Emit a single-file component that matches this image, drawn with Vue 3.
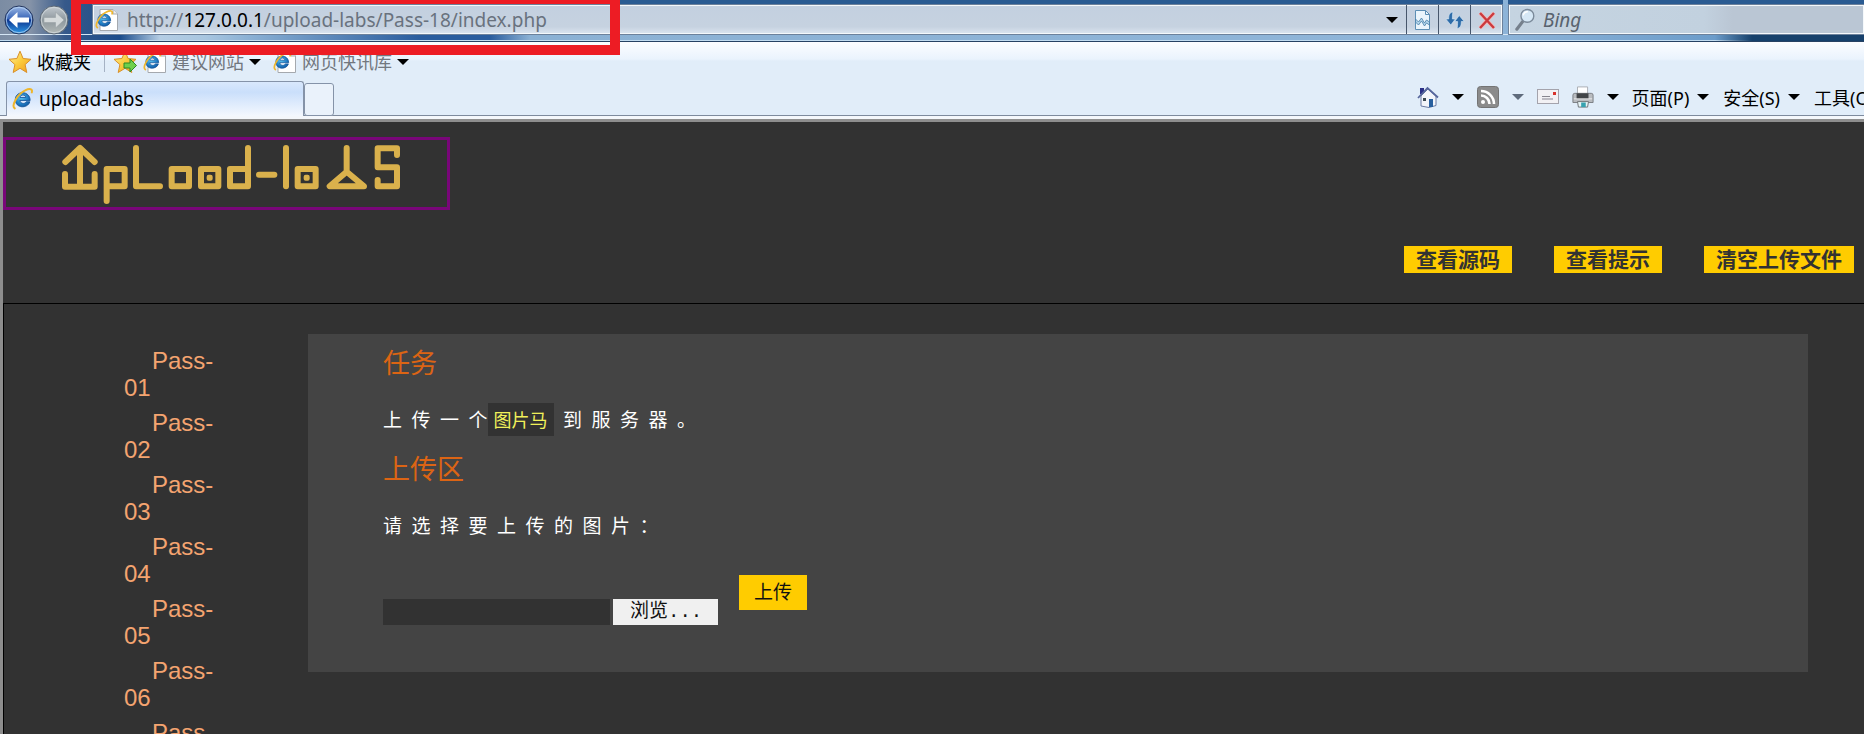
<script setup>
import { ref } from 'vue'

const address = ref('http://127.0.0.1/upload-labs/Pass-18/index.php')
const passes = ['01', '02', '03', '04', '05', '06', '07']
const actions = ['查看源码', '查看提示', '清空上传文件']
const query = ref('')
const fileName = ref('')
</script>

<template>
  <div class="window">
    <svg class="defs" width="0" height="0" aria-hidden="true">
      <defs>
        <radialGradient id="eBlue" cx=".4" cy=".35" r=".75">
          <stop offset="0" stop-color="#5cc4f0" />
          <stop offset=".6" stop-color="#1f7dc4" />
          <stop offset="1" stop-color="#0f4f96" />
        </radialGradient>
        <linearGradient id="starFill" x1="0" y1="0" x2="1" y2="1">
          <stop offset="0" stop-color="#fff3a0" />
          <stop offset=".5" stop-color="#fbcb3c" />
          <stop offset="1" stop-color="#f09a1c" />
        </linearGradient>
        <linearGradient id="backFill" x1="0" y1="0" x2="0" y2="1">
          <stop offset="0" stop-color="#9db9e6" />
          <stop offset=".45" stop-color="#3a66b8" />
          <stop offset=".5" stop-color="#0c3590" />
          <stop offset="1" stop-color="#2f9be8" />
        </linearGradient>
        <linearGradient id="forwardFill" x1="0" y1="0" x2="0" y2="1">
          <stop offset="0" stop-color="#c3cad0" />
          <stop offset=".5" stop-color="#8d979d" />
          <stop offset="1" stop-color="#b4bab8" />
        </linearGradient>
        <symbol id="ie" viewBox="0 0 20 20">
          <path d="M16.500 11.300H7.200c.3 3 4.500 3.700 5.700 1.200h3.300C14.300 19 3 18.800 3 10.500S16.500 2 16.500 11.300zM7.300 8.600h5.200c-.3-3-4.800-3-5.200 0z" fill="url(#eBlue)" stroke="#15549a" stroke-width=".8" />
          <path d="M2.500 18.500C-1 16 5 5.500 12 2.200c4-2 7-1.600 6 1.800" fill="none" stroke="#eeb62c" stroke-width="1.800" stroke-linecap="round" />
        </symbol>
        <symbol id="iePage" viewBox="0 0 24 24">
          <path d="M5 1.500h13l4.500 4.500v16.500H5z" fill="#fff" stroke="#a5a9ae" />
          <path d="M18 1.500V6h4.500" fill="#eee" stroke="#a5a9ae" />
          <use href="#ie" x="0" y="2" width="19" height="19" />
        </symbol>
        <symbol id="star" viewBox="0 0 24 24">
          <path d="M12 1.200l3.100 7.300 7.900.8-5.900 5.300 1.700 7.900-6.800-4.200-6.800 4.200 1.700-7.900L1 9.300l7.900-.8z" fill="url(#starFill)" stroke="#d9902a" stroke-linejoin="round" />
        </symbol>
      </defs>
    </svg>

    <header class="chrome">
      <div class="nav">
        <div class="history">
          <button class="round" aria-label="后退">
            <svg viewBox="0 0 30 30"><circle cx="15" cy="15" r="14" fill="url(#backFill)" stroke="#24365e" /><circle cx="15" cy="15" r="12.700" fill="none" stroke="#b7d4f3" stroke-width=".8" /><path d="M13.500 7L5 15l8.500 8v-5.500H25v-5H13.500z" fill="#fff" /></svg>
          </button>
          <button class="round" aria-label="前进">
            <svg viewBox="0 0 30 30"><circle cx="15" cy="15" r="14" fill="url(#forwardFill)" stroke="#5b6775" /><circle cx="15" cy="15" r="12.700" fill="none" stroke="#d3dade" stroke-width=".8" /><path d="M16.500 7l8.500 8-8.500 8v-5.500H5v-5h11.500z" fill="#d5dadb" stroke="#98a1a5" stroke-width=".6" /></svg>
          </button>
        </div>
        <div class="address">
          <svg class="site"><use href="#iePage" /></svg>
          <a class="url" :href="address">http://<span>127.0.0.1</span>/upload-labs/Pass-18/index.php</a>
          <button class="drop" aria-label="显示地址栏列表"><i class="caret"></i></button>
          <button class="tool" aria-label="兼容性视图">
            <svg viewBox="0 0 20 22"><path d="M2.500 1.500h10l4 4v15h-14z" fill="#eaf5fc" stroke="#5c8fb5" /><path d="M12.500 1.500v4h4" fill="none" stroke="#5c8fb5" /><path d="M2.500 10l3 3 3-4 3 5 2-3 3 2v3l-3-2-2 3-3-5-3 4-3-3z" fill="#b3d5ea" stroke="#457ea8" stroke-width=".8" /></svg>
          </button>
          <button class="tool" aria-label="刷新">
            <svg viewBox="0 0 20 22"><path d="M8 3C4 3.500 3.700 7 3.700 10H.8l5 6 4.500-6H7.400c0-3 0-5 .6-7z" fill="#2d6ba8" stroke="#d9ebf8" stroke-width=".6" /><path d="M12 19.500c4-.5 4.300-4 4.300-7h2.900l-5-6-4.500 6h2.900c0 3 0 5-.6 7z" fill="#2d6ba8" stroke="#d9ebf8" stroke-width=".6" /></svg>
          </button>
          <button class="tool" aria-label="停止">
            <svg viewBox="0 0 20 22"><path d="M3 4l14 15M17 4L3 19" stroke="#f3b9ba" stroke-width="4" /><path d="M3 4l14 15M17 4L3 19" stroke="#cb3a3e" stroke-width="2.400" /></svg>
          </button>
        </div>
        <label class="search">
          <svg viewBox="0 0 24 26"><path d="M8.500 14.500L2 23" stroke="#76808c" stroke-width="3.500" stroke-linecap="round" /><circle cx="13.500" cy="8.500" r="7" fill="#d6e8f6" stroke="#7b8a9a" stroke-width="1.500" /><path d="M9 8a4.500 4.500 0 0 1 5-4" stroke="#fff" stroke-width="1.500" fill="none" /></svg>
          <input v-model="query" type="text" placeholder="Bing" aria-label="Bing" />
        </label>
      </div>

      <div class="favorites">
        <button class="fav main"><svg><use href="#star" /></svg>收藏夹</button>
        <span class="rule"></span>
        <button class="fav" aria-label="添加到收藏夹栏">
          <svg viewBox="0 0 24 24"><use href="#star" /><path d="M11 13h6v-4l6.500 6.500L17 22v-4h-6z" fill="#6fd04c" stroke="#2b8a26" /></svg>
        </button>
        <button class="fav link"><svg><use href="#iePage" /></svg>建议网站<i class="caret"></i></button>
        <button class="fav link"><svg><use href="#iePage" /></svg>网页快讯库<i class="caret"></i></button>
      </div>

      <div class="tabs">
        <button class="tab"><svg><use href="#ie" /></svg>upload-labs</button>
        <button class="newtab" aria-label="新建选项卡"></button>
        <div class="commands">
          <button class="cmd" aria-label="主页">
            <svg viewBox="0 0 22 22"><path d="M3 2h4v6H3z" fill="#2a2f86" /><path d="M4 10v10l8 1.500 7-2V10l-8-7z" fill="#f3f5fa" stroke="#6b7ba2" /><path d="M1 12L10.500 2 21 11.500" fill="none" stroke="#56669c" stroke-width="1.800" /><path d="M6 12h3v3H6z" fill="#3d4a52" /><path d="M12 13h4v8h-4z" fill="#285f9e" /></svg>
            <i class="caret"></i>
          </button>
          <button class="cmd" aria-label="源">
            <svg viewBox="0 0 22 22"><rect x=".5" y=".5" width="21" height="21" rx="3" fill="#8b8b8b" stroke="#747474" /><circle cx="6" cy="16" r="2" fill="#fff" /><path d="M4 9.500a8.500 8.500 0 0 1 8.500 8.500M4 5a13 13 0 0 1 13 13" stroke="#fff" stroke-width="2.600" fill="none" /></svg>
            <i class="caret dim"></i>
          </button>
          <button class="cmd" aria-label="阅读邮件">
            <svg viewBox="0 0 22 22"><rect x=".5" y="3.500" width="21" height="14" fill="#f2f1f4" stroke="#a4a3ac" /><path d="M5 10.500h8M5 13h11" stroke="#88868f" stroke-width="1.200" /><rect x="16" y="6" width="3" height="3" fill="#d8322c" /></svg>
          </button>
          <button class="cmd" aria-label="打印">
            <svg viewBox="0 0 24 24"><path d="M6 1h11v9H6z" fill="#fff" stroke="#a7abb0" /><path d="M1 10q0-2 2-2h18q2 0 2 2v8H1z" fill="#b9bcc0" stroke="#777b80" /><path d="M5 8h13v6H5z" fill="#424548" /><path d="M2 14h20" stroke="#eee" /><path d="M6 17h12l-1 6H7z" fill="#e9f5f7" stroke="#6a6e72" /><path d="M10 18h5v5h-5z" fill="#36a2b0" /></svg>
            <i class="caret"></i>
          </button>
          <button class="cmd text">页面(P)<i class="caret"></i></button>
          <button class="cmd text">安全(S)<i class="caret"></i></button>
          <button class="cmd text last">工具(O)<i class="caret"></i></button>
        </div>
      </div>
      <div class="highlight"></div>
    </header>

    <main class="page">
      <div class="banner">
        <a class="logo" href="#" aria-label="upload-labs">
          <svg viewBox="18 60 1323 201" fill="none" stroke="#dab14c" stroke-width="18" stroke-linecap="round" stroke-linejoin="round">
            <path d="M240 85V198M196 126L240 84L284 126M195 162V200H284V162" />
            <path d="M320 243V147H374V199H320" />
            <path d="M408 84V199H480" />
            <path d="M515 147H567V199H515Z" />
            <path d="M603 147H655V199H603Z" />
            <path d="M744 84V199H690V147H744" />
            <path d="M777 164H823" />
            <path d="M858 84V199" />
            <path d="M893 147H947V199H893Z" />
            <path d="M1040 84V155L989 199H1092L1040 155" />
            <path d="M1191 105V85H1133V142H1191V199H1133V180" />
            <path d="M626 170h6v6h-6zM917 170h6v6h-6z" stroke-width="12" />
          </svg>
        </a>
        <div class="actions">
          <button v-for="a in actions" :key="a">{{ a }}</button>
        </div>
      </div>

      <div class="body">
        <nav class="menu">
          <a v-for="p in passes" :key="p" href="#">Pass-{{ p }}</a>
        </nav>
        <section class="panel">
          <h3>任务</h3>
          <p>上&ensp;传&ensp;一&ensp;个<code>图片马</code>&ensp;到&ensp;服&ensp;务&ensp;器&ensp;。</p>
          <h3>上传区</h3>
          <form @submit.prevent>
            <p><label for="file">请&ensp;选&ensp;择&ensp;要&ensp;上&ensp;传&ensp;的&ensp;图&ensp;片&ensp;：</label></p>
            <div class="upload">
              <input id="file" v-model="fileName" type="text" readonly />
              <button type="button" class="browse">浏览...</button>
              <button type="submit" class="send">上传</button>
            </div>
          </form>
        </section>
      </div>
    </main>
  </div>
</template>

<style>
html,
body,
#app {
  height: 100%;
  overflow: hidden;
}
body {
  margin: 0;
}
</style>

<style scoped>
* {
  box-sizing: border-box;
}
button {
  border: 0;
  padding: 0;
  background: none;
  color: inherit;
  font: inherit;
  white-space: nowrap;
}
a {
  text-decoration: none;
  color: inherit;
}
.window {
  height: 100%;
  display: flex;
  flex-direction: column;
  font-family: "Noto Sans", "Noto Sans CJK SC", sans-serif;
  background: #323232;
}
.defs {
  position: absolute;
}
.caret {
  flex: none;
  border: 6px solid transparent;
  border-top-color: #000;
  border-bottom: 0;
}
.caret.dim {
  border-top-color: #5f6b7c;
}

.chrome {
  position: relative;
  flex: none;
  background: #e1edf9;
  border-bottom: 3px solid #8e8e8e;
}
.nav {
  height: 42px;
  display: flex;
  align-items: flex-start;
  padding-top: 4px;
  border-bottom: 1px solid #274263;
  background:
    linear-gradient(90deg, transparent 92%, #16406b 94%),
    linear-gradient(transparent 34px, #d5e6f5 34px, #d5e6f5 35px, transparent 35px, transparent 40px, #c2dcf0 40px),
    linear-gradient(90deg, #7b8ca3 0, #8593a8 30px, #36598a 65px, #1c4d8c 120px, #b4cde4 160px, #a9c6e0 205px, #8ab0d4 250px, #2a5d9e 420px, #2a5d9e 490px, #8bb1d4 530px, #8fb5d9 80%, #6c9cca 92%);
}
.history {
  display: flex;
  gap: 5px;
  width: 92px;
  padding-left: 4px;
}
.round {
  width: 30px;
  height: 32px;
}
.round svg {
  display: block;
  width: 30px;
  height: 30px;
}
.address,
.search {
  height: 31px;
  border: 1px solid #6c819b;
  box-shadow: inset 0 0 0 1px #f4f8fb, 0 -4px 0 #2a5b92;
  background: linear-gradient(#c3d0e0, #c6d2e0 75%, #dbe5f0);
}
.address {
  flex: 1;
  display: flex;
  align-items: center;
}
.site {
  width: 24px;
  height: 24px;
  margin: 0 8px 0 2px;
}
.url {
  flex: 1;
  color: #69727e;
  font-size: 19px;
  line-height: 28px;
}
.url span {
  color: #000;
}
.drop {
  width: 28px;
  height: 29px;
  display: grid;
  place-items: center;
}
.tool {
  width: 32px;
  height: 29px;
  display: grid;
  place-items: center;
  border-left: 1px solid #47566b;
}
.tool svg {
  width: 20px;
  height: 22px;
}
.search {
  width: 356px;
  margin-left: 5px;
  display: flex;
  align-items: center;
  padding-left: 6px;
  border-right: 0;
  background: linear-gradient(90deg, #c5d4e1, #c2d1df 55%, #bac6d4 63%);
}
.search svg {
  width: 22px;
  height: 24px;
}
.search input {
  width: 200px;
  margin-left: 6px;
  padding: 0;
  border: 0;
  background: none;
  font: italic 19px/26px "Noto Sans", sans-serif;
}
.search input::placeholder {
  color: #59636f;
  opacity: 1;
}

.favorites {
  height: 39px;
  display: flex;
  align-items: center;
  padding: 0 8px 0;
  font-size: 18px;
  line-height: 26px;
  background: linear-gradient(#fcfdff, #eaf3fd 17px, #e1edf9 19px);
}
.fav {
  display: flex;
  align-items: center;
  gap: 5px;
}
.fav svg {
  width: 24px;
  height: 24px;
}
.rule {
  width: 1px;
  height: 20px;
  margin: 0 8px 0 13px;
  background: #a5b2c4;
}
.link {
  margin-left: 6px;
  color: #72777e;
}
.link + .link {
  margin-left: 12px;
}
.tabs {
  height: 38px;
  display: flex;
  align-items: flex-start;
  padding-left: 6px;
  background: linear-gradient(transparent 34px, #7d8a9d 34px, #7d8a9d 35px, #f4f7fb 35px);
}
.tab {
  width: 298px;
  height: 35px;
  display: flex;
  align-items: center;
  gap: 5px;
  padding-left: 5px;
  border: 1px solid #8593a8;
  border-bottom: 0;
  border-radius: 3px 3px 0 0;
  background: linear-gradient(#d9e8fc, #cadffb 30%, #f4f8fe);
  font-size: 19px;
}
.tab svg {
  width: 22px;
  height: 22px;
}
.newtab {
  width: 30px;
  height: 33px;
  margin-top: 2px;
  border: 1px solid #8593a8;
  border-radius: 3px;
  background: #eaf2fb;
}
.commands {
  margin-left: auto;
  height: 32px;
  display: flex;
  align-items: center;
  font-size: 18px;
}
.cmd {
  display: flex;
  align-items: center;
  gap: 13px;
  margin-right: 13px;
}
.cmd svg {
  width: 22px;
  height: 22px;
}
.cmd.text {
  gap: 8px;
  margin-right: 14px;
}
.cmd.last {
  width: 50px;
  margin: 0;
  overflow: hidden;
}
.highlight {
  position: absolute;
  left: 71px;
  top: 0;
  width: 549px;
  height: 55px;
  border: 10px solid #ed1c24;
  border-top-width: 4px;
}

.page {
  flex: 1;
  min-height: 0;
  border-left: 3px solid #8e8e8e;
  color: #fff;
}
.banner {
  display: flex;
  flex-direction: column;
  align-items: flex-start;
  padding: 15px 10px 30px 0;
  border-bottom: 1px solid #000;
}
.logo {
  width: 447px;
  border: 3px solid #790679;
}
.logo svg {
  display: block;
  width: 100%;
}
.actions {
  align-self: flex-end;
  display: flex;
  gap: 42px;
  margin-top: 36px;
}
.actions button {
  height: 27px;
  padding: 0 12px;
  background: #fc0;
  color: #323232;
  font-size: 21px;
  font-weight: 700;
  line-height: 27px;
}
.body {
  display: flex;
  align-items: flex-start;
  padding-right: 56px;
  border-left: 1px solid #000;
}
.menu {
  width: 304px;
  flex: none;
  display: flex;
  flex-direction: column;
  gap: 8px;
  padding: 43px 80px 0 120px;
}
.menu a {
  text-indent: 28px;
  color: #f4a470;
  font: 24px/27px "Liberation Sans", Arial, sans-serif;
}
.panel {
  flex: 1;
  margin-top: 30px;
  padding: 8px 75px 47px;
  background: #444;
  font-family: "Noto Sans CJK SC", sans-serif;
}
h3 {
  margin: 0;
  color: #dc6414;
  font-size: 27px;
  font-weight: 400;
  line-height: 40px;
}
p {
  margin: 19px 0 11px;
  font-size: 19px;
  font-weight: 400;
  line-height: 36px;
}
code {
  display: inline-block;
  padding: 0 6px;
  background: #323232;
  color: #f0f05a;
  font: 400 18px/33px "Noto Sans CJK SC", sans-serif;
}
.upload {
  display: flex;
  align-items: flex-end;
  margin-top: 32px;
}
.upload input {
  width: 227px;
  height: 26px;
  padding: 0 4px;
  border: 0;
  background: #323232;
  color: #fff;
}
.browse {
  width: 105px;
  height: 26px;
  margin: 0 21px 0 3px;
  padding-left: 17px;
  background: #f0f0f0;
  color: #111;
  font-family: "Liberation Mono", "Noto Sans CJK SC", monospace;
  font-size: 19px;
  line-height: 22px;
  text-align: left;
}
.send {
  width: 68px;
  height: 35px;
  margin-bottom: 15px;
  padding-bottom: 4px;
  background: #fc0;
  color: #111;
  font-size: 19px;
  line-height: 31px;
}
</style>
